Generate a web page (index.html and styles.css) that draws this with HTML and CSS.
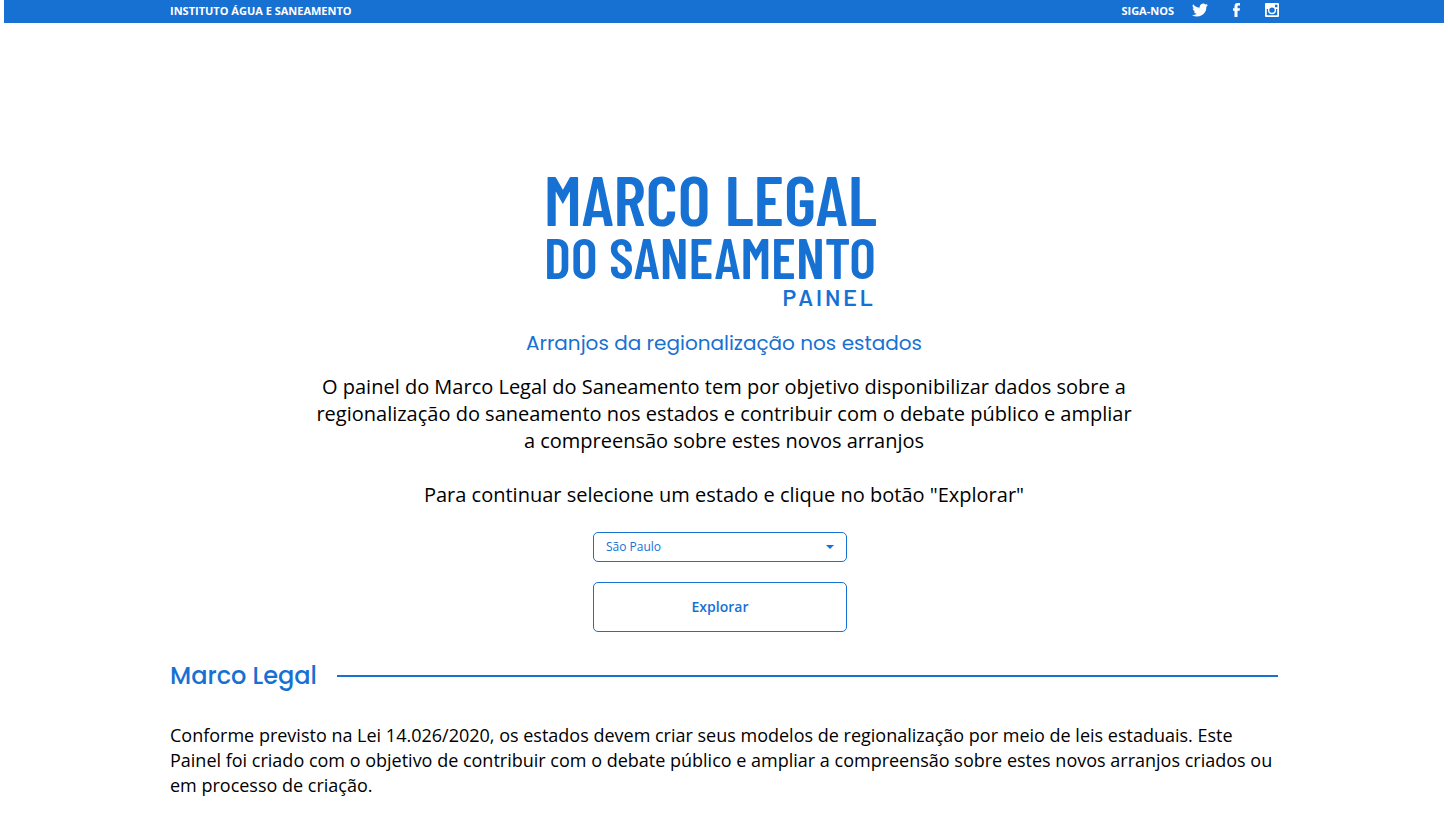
FILE: index.html
```html
<!DOCTYPE html>
<html lang="pt-BR">
<head>
<meta charset="utf-8">
<title>Marco Legal do Saneamento</title>
<link rel="stylesheet" href="styles.css">
</head>
<body>
<header class="topbar">
  <div class="container topbar-row">
    <a class="topbar-link" href="#">INSTITUTO ÁGUA E SANEAMENTO</a>
    <nav class="social">
      <span class="social-label">SIGA-NOS</span>
      <a class="social-link" href="#" aria-label="Twitter"><svg width="16" height="16" viewBox="0 0 24 24" fill="currentColor"><path d="M24 4.600a10 10 0 0 1-2.800.8 5 5 0 0 0 2.100-2.700 10 10 0 0 1-3.100 1.200 4.900 4.900 0 0 0-8.400 4.500A14 14 0 0 1 1.700 3.200a4.900 4.900 0 0 0 1.500 6.600 4.900 4.900 0 0 1-2.200-.6 4.900 4.900 0 0 0 3.900 4.900 5 5 0 0 1-2.200.1 4.900 4.900 0 0 0 4.600 3.400A10 10 0 0 1 0 19.500a14 14 0 0 0 21.500-12.400A10 10 0 0 0 24 4.600z"/></svg></a>
      <a class="social-link" href="#" aria-label="Facebook"><svg width="16" height="16" viewBox="0 0 16 16" fill="currentColor"><path d="M6.500 15V8.800H5V6.200h1.500V4.400C6.500 2.200 7.700 1 9.700 1H12v2.500h-1.400c-.8 0-1.100.4-1.100 1.100v1.600H12L11.600 8.800H9.500V15z"/></svg></a>
      <a class="social-link" href="#" aria-label="Instagram"><svg width="16" height="16" viewBox="0 0 16 16" fill="currentColor"><path fill-rule="evenodd" d="M2 1h12q1 0 1 1v12q0 1-1 1H2q-1 0-1-1V2q0-1 1-1zM11 2.800v2.400h2.400V2.800zM2.800 7v6.300h10.400V7h-1.300a4.100 4.100 0 1 1-7.800 0zM8 5.400a2.700 2.700 0 1 0 0 5.400 2.700 2.700 0 0 0 0-5.400z"/></svg></a>
    </nav>
  </div>
</header>
<main class="container">
  <section class="hero">
    <h1 class="logo">
      <span class="logo-main">MARCO LEGAL</span>
      <span class="logo-sub">DO SANEAMENTO</span>
      <span class="logo-tag">PAINEL</span>
    </h1>
    <h2 class="tagline">Arranjos da regionalização nos estados</h2>
    <p class="intro">O painel do Marco Legal do Saneamento tem por objetivo disponibilizar dados sobre a regionalização do saneamento nos estados e contribuir com o debate público e ampliar a compreensão sobre estes novos arranjos</p>
    <p class="intro">Para continuar selecione um estado e clique no botão "Explorar"</p>
    <form class="picker">
      <div class="select-wrap">
        <select class="state" aria-label="Estado"><option>São Paulo</option></select>
        <svg class="caret" width="8" height="4" viewBox="0 0 8 4" fill="currentColor"><path d="M0 0h8L4 4z"/></svg>
      </div>
      <button class="explore" type="button">Explorar</button>
    </form>
  </section>
  <section>
    <h2 class="section-title">Marco Legal</h2>
    <p class="body-text">Conforme previsto na Lei 14.026/2020, os estados devem criar seus modelos de regionalização por meio de leis estaduais. Este Painel foi criado com o objetivo de contribuir com o debate público e ampliar a compreensão sobre estes novos arranjos criados ou em processo de criação.</p>
  </section>
</main>
</body>
</html>
```
FILE: styles.css
```css
* { box-sizing: border-box; }
body {
  margin: 0 4px;
  background: #fff;
  color: #000;
  font-family: "Open Sans", "Noto Sans", sans-serif;
}
h1, h2, p { margin: 0; }
.container { max-width: 1108px; margin: 0 auto; }
.topbar {
  padding-bottom: 1px;
  background: #1771d3;
  color: #fff;
  font-size: 11px;
  font-weight: 700;
  line-height: 22px;
}
.topbar-row { display: flex; justify-content: space-between; }
.topbar-link { color: inherit; text-decoration: none; }
.social {
  display: flex;
  align-items: flex-start;
  gap: 20px;
  margin-right: -2px;
}
.social-label { margin-right: -2px; }
.social-link { display: flex; padding-top: 2px; color: inherit; }
.hero {
  display: flex;
  flex-direction: column;
  align-items: center;
  padding-top: 144px;
}
.logo {
  display: flex;
  flex-direction: column;
  width: 332px;
  margin-right: 28px;
  color: #1771d3;
  font-family: "Barlow Condensed", "Roboto", sans-serif;
  font-weight: 600;
  white-space: nowrap;
}
.logo-main { font-size: 70px; line-height: 62px; }
.logo-sub { font-size: 57px; line-height: 54px; }
.logo-tag {
  align-self: flex-end;
  padding-bottom: 4px;
  font-family: "Barlow", "Roboto", sans-serif;
  font-size: 23px;
  font-weight: 600;
  line-height: 28px;
  letter-spacing: 3px;
}
.tagline {
  margin: 13px 0 15px;
  color: #1771d3;
  font-family: Poppins, Inter, sans-serif;
  font-size: 20px;
  font-weight: 400;
  line-height: 30px;
}
.intro {
  max-width: 828px;
  font-size: 20px;
  line-height: 27px;
  text-align: center;
}
.intro + .intro { margin: 27px 0 24px; }
.picker {
  display: flex;
  flex-direction: column;
  gap: 20px;
  width: 254px;
  margin-right: 8px;
}
.select-wrap { position: relative; color: #1771d3; }
.state {
  display: block;
  width: 100%;
  height: 30px;
  padding: 0 12px 2px;
  appearance: none;
  border: 1px solid #1771d3;
  border-radius: 5px;
  background: #fff;
  color: #1771d3;
  font: 400 12px "Open Sans", sans-serif;
}
.caret { position: absolute; top: 13px; right: 13px; pointer-events: none; }
.explore {
  height: 50px;
  padding-bottom: 3px;
  border: 1px solid #1771d3;
  border-radius: 5px;
  background: #fff;
  color: #1771d3;
  font: 600 14px "Open Sans", sans-serif;
}
.section-title {
  display: flex;
  align-items: center;
  gap: 20px;
  margin: 25px 0 28px;
  color: #1771d3;
  font-family: Poppins, Inter, sans-serif;
  font-size: 24px;
  font-weight: 500;
  line-height: 38px;
}
.section-title::after {
  content: "";
  flex: 1;
  height: 2px;
  background: #1771d3;
}
.body-text { font-size: 18px; line-height: 25px; }
```
